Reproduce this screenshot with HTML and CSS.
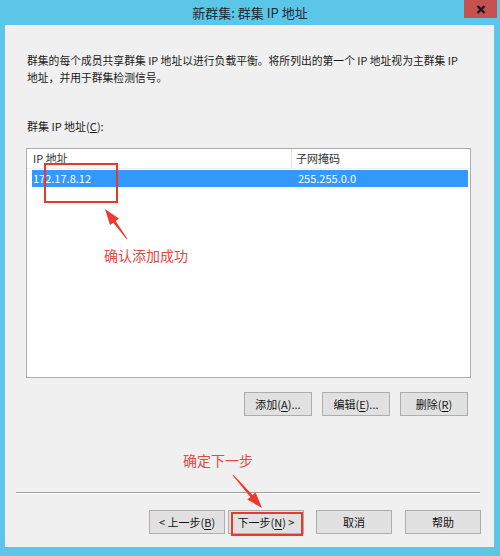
FILE: index.html
```html
<!DOCTYPE html>
<html lang="zh-CN">
<head>
<meta charset="utf-8">
<title>新群集: 群集 IP 地址</title>
<link rel="stylesheet" href="styles.css">
</head>
<body>
<div class="window">
  <div class="titlebar">
    <span class="title">新群集: 群集 IP 地址</span>
    <div class="close">
      <svg width="10" height="9" viewBox="0 0 10 9"><path d="M1.5 1 L8.5 8 M8.5 1 L1.5 8" stroke="#1a1a1a" stroke-width="2.4" fill="none"/></svg>
    </div>
  </div>
  <div class="client">
    <p class="desc">群集的每个成员共享群集 IP 地址以进行负载平衡。将所列出的第一个 IP 地址视为主群集 IP<br>地址，并用于群集检测信号。</p>
    <div class="label">群集 IP 地址(<u>C</u>):</div>
    <div class="listbox">
      <div class="lv-head">
        <div class="hcell h1">IP 地址</div>
        <div class="hcell h2">子网掩码</div>
      </div>
      <div class="lv-row selected">
        <div class="cell c1">172.17.8.12</div>
        <div class="cell c2">255.255.0.0</div>
      </div>
    </div>
    <div class="list-buttons">
      <div class="btn">添加(<u>A</u>)...</div>
      <div class="btn">编辑(<u>E</u>)...</div>
      <div class="btn">删除(<u>R</u>)</div>
    </div>
    <div class="separator"></div>
    <div class="nav-buttons">
      <div class="btn nav back">&lt; 上一步(<u>B</u>)</div>
      <div class="btn nav next">下一步(<u>N</u>) &gt;</div>
      <div class="btn nav cancel">取消</div>
      <div class="btn nav help">帮助</div>
    </div>
  </div>

  <svg class="annot" width="500" height="556" viewBox="0 0 500 556">
    <rect x="45" y="164" width="72" height="38" fill="none" stroke="#e8392f" stroke-width="2"/>
    <rect x="232" y="513" width="70" height="22" fill="none" stroke="#e8392f" stroke-width="2"/>
    <polygon fill="#ee3a2e" points="105,209 118.9,218.6 115.7,221.0 127.4,238.7 126.6,239.3 113.3,222.8 110.0,225.1"/>
    <polygon fill="#ee3a2e" points="262,508 247.3,499.6 250.3,497.0 232.6,475.3 233.4,474.7 252.6,495.0 255.6,492.4"/>
  </svg>
  <div class="note note1">确认添加成功</div>
  <div class="note note2">确定下一步</div>
</div>
</body>
</html>
```

FILE: styles.css
```css
* { box-sizing: border-box; }

html, body {
  margin: 0;
  padding: 0;
}

body {
  width: 500px;
  height: 556px;
  background: #5bc6e8;
  font-family: "Noto Sans CJK SC", "Noto Sans", sans-serif;
  font-size: 11px;
  color: #1a1a1a;
  overflow: hidden;
}

.window {
  position: relative;
  width: 500px;
  height: 556px;
  background: #5bc6e8;
}

.titlebar {
  height: 25px;
  display: flex;
  align-items: center;
  justify-content: center;
}

.title {
  font-size: 13px;
  line-height: 25px;
  color: #1e2a30;
}

.close {
  position: absolute;
  top: 0;
  left: 464px;
  width: 33px;
  height: 18px;
  background: #c75050;
  display: flex;
  align-items: center;
  justify-content: center;
}

.client {
  margin: 0 6px 0 5px;
  height: 522px;
  background: #f0f0f0;
  display: flex;
  flex-direction: column;
}

.desc {
  margin: 27px 0 0 22px;
  width: 450px;
  line-height: 17px;
  font-size: 10.8px;
  color: #1a1a1a;
}

.label {
  margin: 32px 0 0 22px;
  line-height: 17px;
}

.listbox {
  margin: 13px 0 0 21px;
  width: 445px;
  height: 230px;
  border: 1px solid #acacac;
  background: #ffffff;
}

.lv-head {
  display: flex;
  height: 20px;
  border-bottom: 1px solid #f0f0f0;
  color: #333;
}

.hcell {
  line-height: 19px;
}

.h1 {
  width: 265px;
  padding-left: 6px;
  border-right: 1px solid #e3e3e3;
}

.h2 {
  padding-left: 4px;
}

.lv-row {
  display: flex;
  margin: 1px 2px 0 5px;
  height: 17px;
  line-height: 17px;
}

.lv-row.selected {
  background: #3399ff;
  color: #ffffff;
}

.c1 {
  width: 266px;
  padding-left: 1px;
}

.list-buttons {
  margin: 14px 26px 0 0;
  display: flex;
  justify-content: flex-end;
  gap: 10px;
}

.btn {
  height: 24px;
  width: 68px;
  border: 1px solid #adadad;
  background: #e1e1e1;
  display: flex;
  align-items: center;
  justify-content: center;
  font-size: 11px;
  color: #111;
  white-space: nowrap;
}

.btn u {
  text-underline-offset: 2px;
}

.separator {
  margin: 76px 14px 0 11px;
  height: 2px;
  border-top: 1px solid #a0a0a0;
  border-bottom: 1px solid #ffffff;
}

.nav-buttons {
  margin: 16px 13px 0 0;
  display: flex;
  justify-content: flex-end;
}

.btn.nav {
  width: 76px;
}

.btn.next {
  margin-left: 3px;
}

.btn.cancel {
  margin-left: 12px;
}

.btn.help {
  margin-left: 13px;
}

.annot {
  position: absolute;
  left: 0;
  top: 0;
  pointer-events: none;
}

.note {
  position: absolute;
  font-size: 14px;
  line-height: 18px;
  color: #e8473d;
  white-space: nowrap;
}

.note1 {
  left: 104px;
  top: 246px;
}

.note2 {
  left: 183px;
  top: 451px;
}
```
